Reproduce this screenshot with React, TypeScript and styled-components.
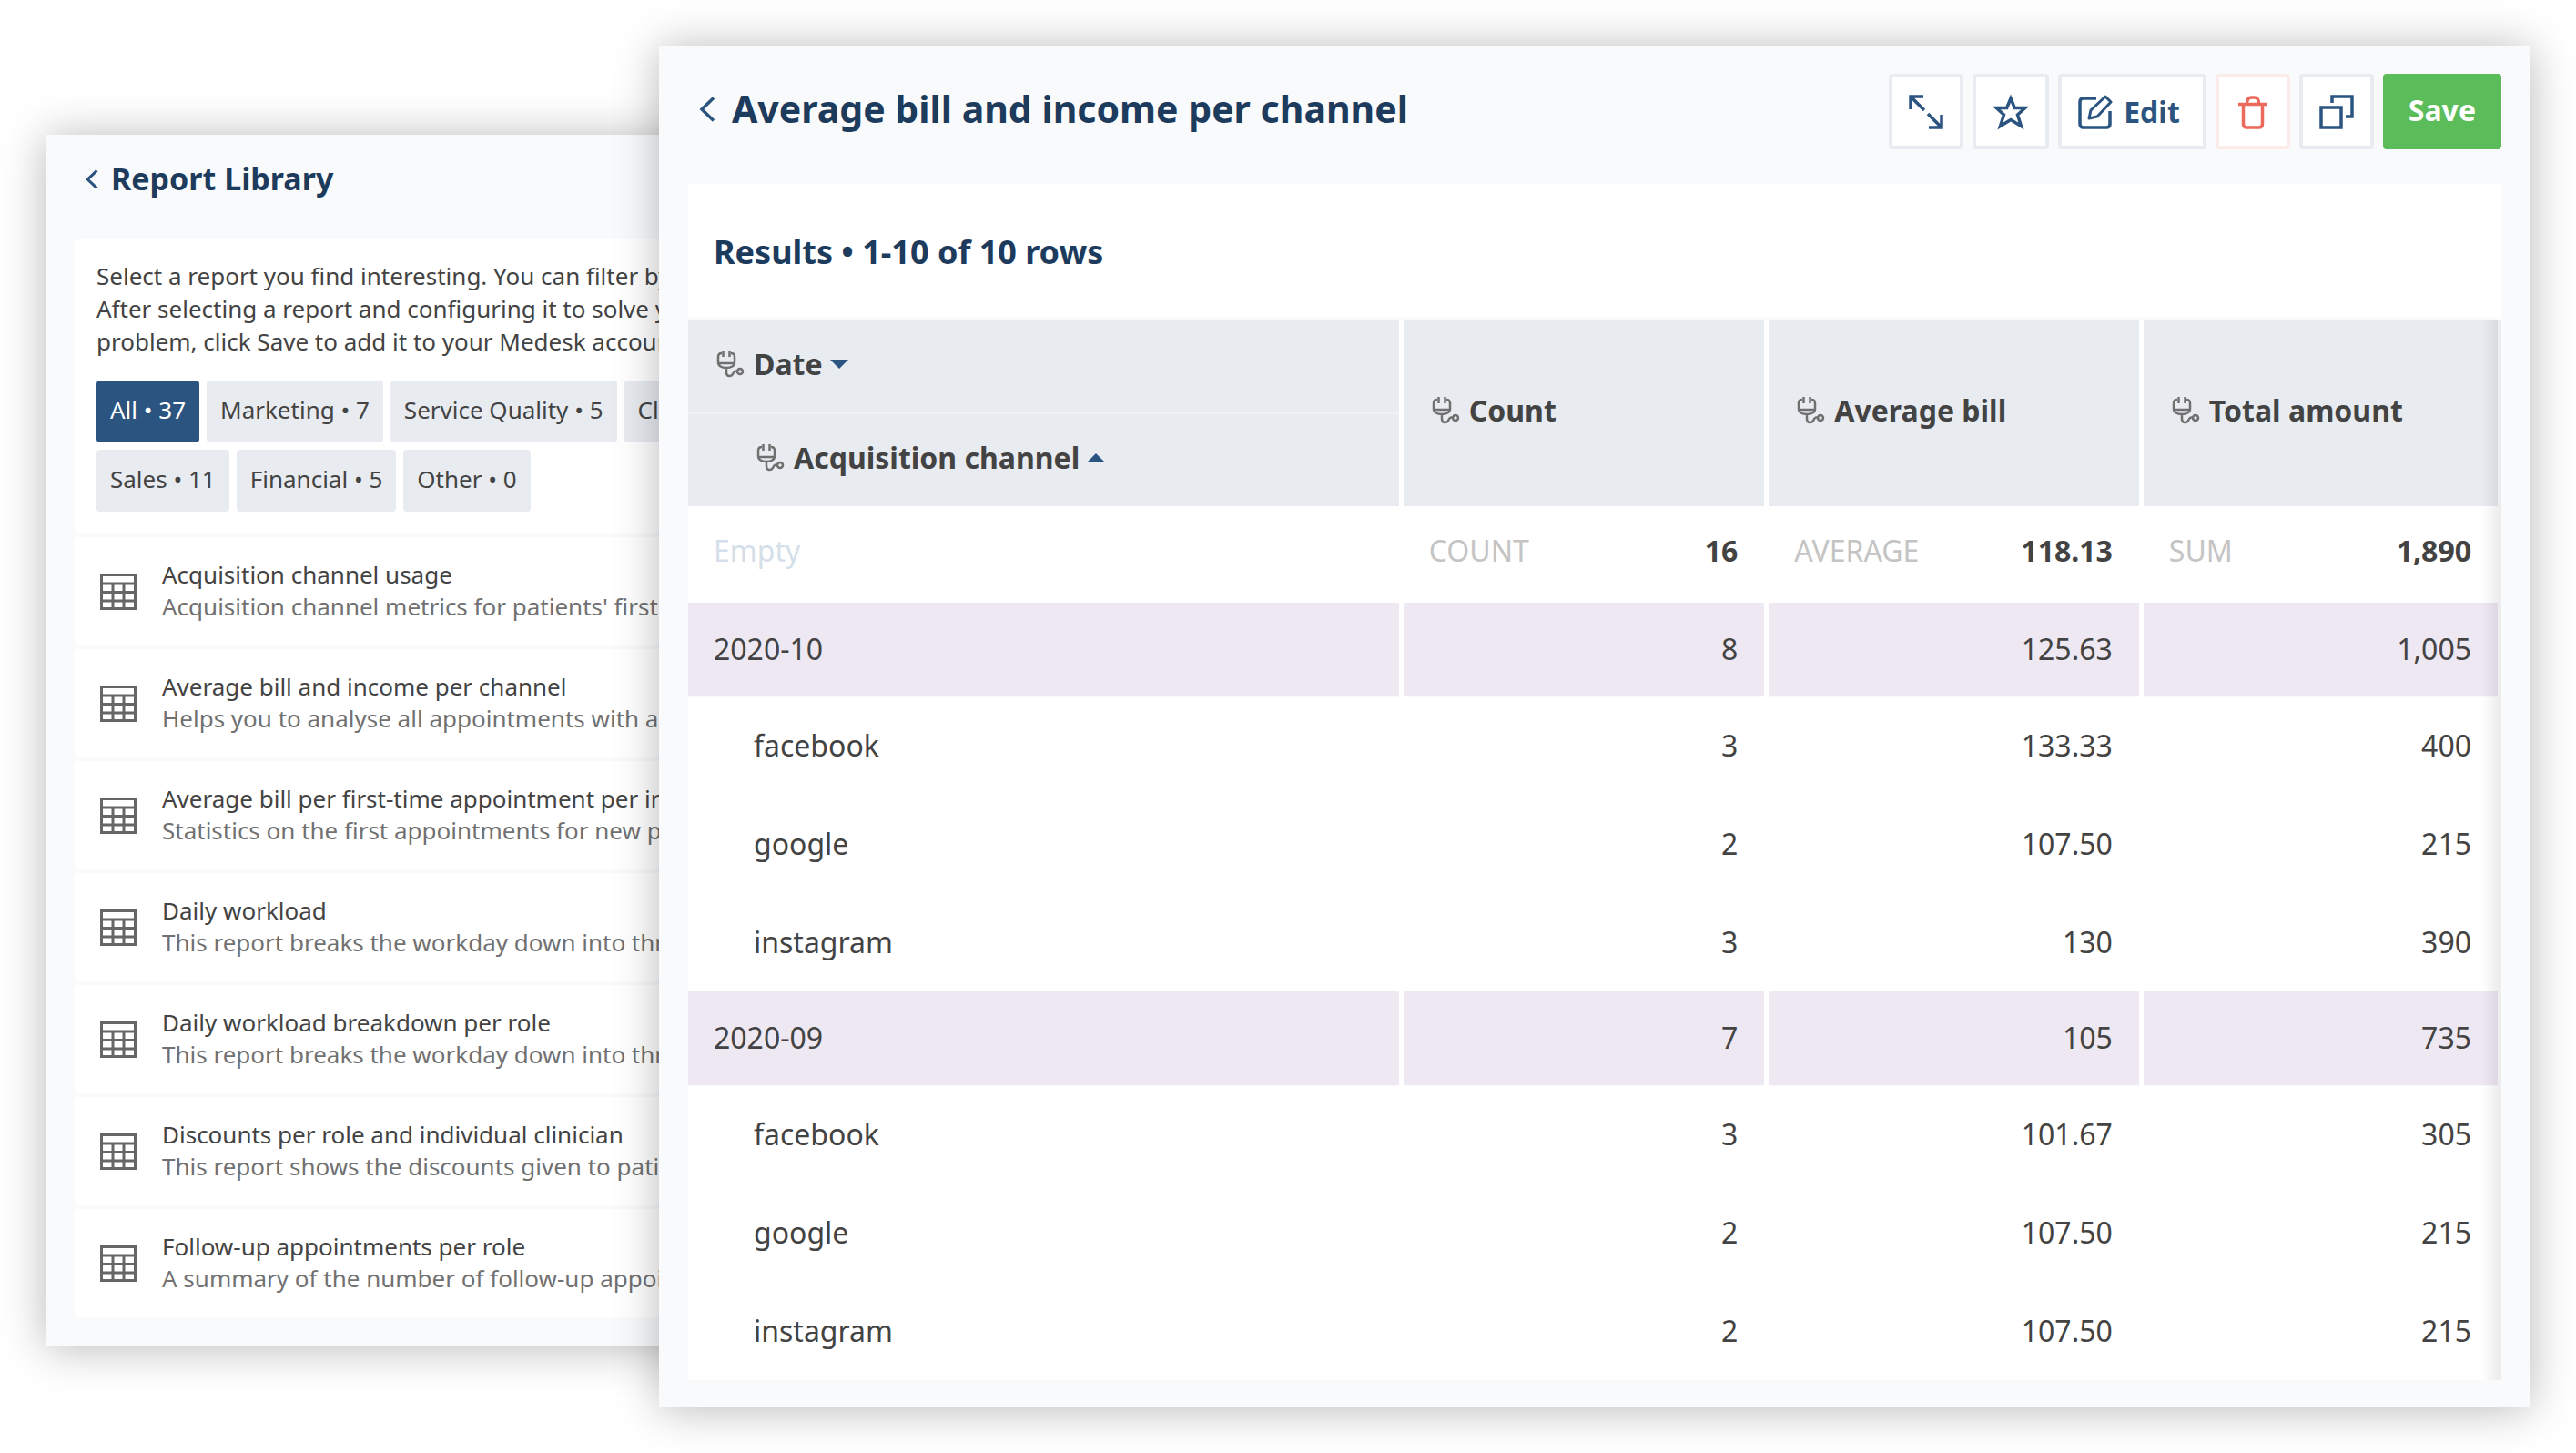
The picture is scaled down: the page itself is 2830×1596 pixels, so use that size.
import React from "react";
import styled, { createGlobalStyle } from "styled-components";

const font = '"Noto Sans", "Open Sans", sans-serif';
const navy = "#1d3b5c";
const blue = "#2b5480";
const ink = "#434343";

const GlobalStyle = createGlobalStyle`
  *, *::before, *::after { box-sizing: border-box; }
  body { margin: 0; background: #fff; font-family: ${font}; color: ${ink}; }
  button { font-family: inherit; cursor: pointer; }
  h1, h2, h3, p, ul { margin: 0; padding: 0; }
`;

const Stage = styled.main`
  position: relative;
  min-height: 100vh;
  overflow: hidden;
`;

const Panel = styled.section`
  position: absolute;
  background: #f9fafc;
  box-shadow: 0 2px 46px rgba(0, 0, 0, 0.28);
`;

const LibraryPanel = styled(Panel)`
  top: 148px;
  left: 50px;
  width: 32%;
  padding: 24px 32px 32px;
`;

const ReportPanel = styled(Panel)`
  top: 50px;
  left: 724px;
  right: 50px;
  padding: 31px 32px 30px;
`;

const TitleBar = styled.header<{ $height: number }>`
  display: flex;
  align-items: flex-start;
  justify-content: space-between;
  height: ${(p) => p.$height}px;
`;

const TitleGroup = styled.div<{ $height: number; $gap: number }>`
  display: flex;
  align-items: center;
  gap: ${(p) => p.$gap}px;
  height: ${(p) => p.$height}px;
  padding-left: 12px;
`;

const BackButton = styled.button`
  display: flex;
  padding: 2px 0 0;
  border: 0;
  background: none;
  color: ${blue};
`;

const Title = styled.h1<{ $size: number }>`
  color: ${navy};
  font-size: ${(p) => p.$size}px;
  line-height: 48px;
  font-weight: 700;
  white-space: nowrap;
`;

const Intro = styled.div`
  height: 322px;
  padding: 22px 24px;
  border-radius: 4px;
  background: #fff;
`;

const IntroText = styled.p`
  font-size: 26px;
  line-height: 36px;
  white-space: nowrap;
`;

const Filters = styled.div`
  display: flex;
  flex-wrap: wrap;
  gap: 8px;
  margin-top: 25px;
`;

const FilterButton = styled.button<{ $active?: boolean }>`
  height: 68px;
  padding: 0 15px 4px;
  border: 0;
  border-radius: 4px;
  background: ${(p) => (p.$active ? blue : "#e8ebf0")};
  color: ${(p) => (p.$active ? "#fff" : ink)};
  font-size: 26px;
  line-height: 36px;
`;

const ReportList = styled.ul`
  display: flex;
  flex-direction: column;
  gap: 4px;
  margin-top: 5px;
  list-style: none;
`;

const ReportItem = styled.li`
  display: flex;
  align-items: center;
  gap: 28px;
  height: 119px;
  padding: 0 28px;
  border-radius: 4px;
  background: #fff;
  white-space: nowrap;
  overflow: hidden;
`;

const ReportText = styled.div`
  padding-bottom: 2px;
`;

const ReportName = styled.h3`
  font-size: 26px;
  line-height: 35px;
  font-weight: 400;
`;

const ReportSummary = styled.p`
  color: #717171;
  font-size: 26px;
  line-height: 35px;
`;

const Toolbar = styled.div`
  display: flex;
  gap: 10px;
`;

const ToolButton = styled.button<{ $tone?: "danger" | "primary"; $labelled?: boolean }>`
  display: flex;
  align-items: center;
  justify-content: center;
  gap: 12px;
  min-width: 82px;
  height: 83px;
  padding: ${(p) => (p.$tone === "primary" ? "0 24px 3px" : p.$labelled ? "0 25px 0 18px" : "0 18px")};
  border: 4px solid
    ${(p) => (p.$tone === "danger" ? "#fbeceb" : p.$tone === "primary" ? "#5bbd5a" : "#e8ebf0")};
  border-radius: 4px;
  background: ${(p) => (p.$tone === "primary" ? "#5bbd5a" : "#fff")};
  color: ${(p) => (p.$tone === "danger" ? "#ec6a5c" : p.$tone === "primary" ? "#fff" : blue)};
  font-size: 32px;
  line-height: 40px;
  font-weight: 700;
`;

const Card = styled.div`
  position: relative;
  padding-right: 4px;
  background: #fff;
`;

const CardShade = styled.div`
  position: absolute;
  top: 150px;
  right: 0;
  bottom: 0;
  width: 22px;
  background: linear-gradient(to right, transparent, rgba(0, 0, 0, 0.07) 18px);
  pointer-events: none;
`;

const ResultsTitle = styled.h2`
  height: 150px;
  padding: 51px 28px 0;
  border-bottom: 4px solid #f9fafc;
  color: ${navy};
  font-size: 36px;
  line-height: 48px;
  font-weight: 700;
`;

const Table = styled.table`
  width: 100%;
  table-layout: fixed;
  border-collapse: collapse;
  font-size: 32px;
  line-height: 44px;
`;

const Col = styled.col<{ $share: number }>`
  width: ${(p) => p.$share}%;
`;

const HeadCell = styled.th<{ $indent?: boolean; $divided?: boolean }>`
  height: 102px;
  padding: 0 28px 6px ${(p) => (p.$indent ? 72 : 28)}px;
  border-left: 5px solid #fff;
  border-bottom: ${(p) => (p.$divided ? "2px solid #eef1f5" : "0")};
  background: #e8ebf0;
  text-align: left;
  font-weight: 700;
  &:first-child { border-left: 0; }
`;

const HeadLabel = styled.span`
  display: flex;
  align-items: center;
  gap: 8px;
  white-space: nowrap;
`;

const rowHeights = { total: 106, group: 103, leaf: 108 };

const BodyRow = styled.tr<{ $kind: keyof typeof rowHeights }>`
  height: ${(p) => rowHeights[p.$kind]}px;
  border-bottom: ${(p) => (p.$kind === "group" ? "1px solid #fafafc" : "0")};
  background: ${(p) => (p.$kind === "group" ? "#eee8f3" : "#fff")};
  & > th, & > td { padding-bottom: ${(p) => (p.$kind === "total" ? 9 : 0)}px; }
`;

const NameCell = styled.th<{ $indent?: boolean; $faded?: boolean }>`
  padding: 0 28px 0 ${(p) => (p.$indent ? 72 : 28)}px;
  color: ${(p) => (p.$faded ? "#d5dfe9" : ink)};
  text-align: left;
  font-weight: 400;
`;

const ValueCell = styled.td<{ $bold?: boolean }>`
  padding: 0 29px 0 28px;
  border-left: 5px solid #fff;
  text-align: right;
  font-weight: ${(p) => (p.$bold ? 700 : 400)};
`;

const Total = styled.div`
  display: flex;
  justify-content: space-between;
`;

const TotalKind = styled.span`
  color: #c4c4c4;
  font-weight: 400;
`;

const BackIcon = ({ small }: { small?: boolean }) => (
  <svg
    width={small ? 14 : 18}
    height={small ? 22 : 28}
    viewBox="0 0 18 28"
    fill="none"
    stroke="currentColor"
    strokeWidth={small ? 4 : 3.5}
  >
    <path d="M16 1.500 3 14l13 12.500" />
  </svg>
);

const GridIcon = () => (
  <svg width="40" height="40" viewBox="0 0 40 40" fill="none" stroke="#666" strokeWidth="3">
    <path d="M1.500 1.500h37v37h-37zM1.500 11h37M1.500 20.500h37M1.500 30h37M14 11v27M26 11v27" />
  </svg>
);

const PlugIcon = () => (
  <svg width="36" height="32" viewBox="0 0 36 32" fill="none" stroke="#707070" strokeWidth="2.500">
    <path d="M10.500 1v7M17.500 1v7M9 4C6 4 5 6 5 8v6c0 4 4 6 9 6s9-2 9-6V8c0-2-1-4-4-4M5 15h18M14 20v5c0 5 5 5 7 2 2-4 3-4 6-3" />
    <circle cx="29" cy="24" r="3" />
  </svg>
);

const SortIcon = ({ up }: { up?: boolean }) => (
  <svg width="20" height="10" viewBox="0 0 20 10" fill={blue}>
    <path d={up ? "M0 10 10 0l10 10z" : "M0 0h20L10 10z"} />
  </svg>
);

const ExpandIcon = () => (
  <svg width="38" height="38" viewBox="0 0 38 38" fill="none" stroke="currentColor" strokeWidth="3.500">
    <path d="M2 16V2h14M2 2l15 15M21 21l15 15M36 22v14H22" />
  </svg>
);

const StarIcon = () => (
  <svg width="40" height="40" viewBox="0 0 40 40" fill="none" stroke="currentColor" strokeWidth="3.500">
    <path
      strokeMiterlimit="8"
      d="M20 5l4.300 10.500h11.500L27.500 23l4 12.500L20 28.500l-11.500 7 4-12.500-8.300-7.500h11.500z"
    />
  </svg>
);

const EditIcon = () => (
  <svg width="38" height="38" viewBox="0 0 38 38" fill="none" stroke="currentColor" strokeWidth="3.500">
    <path d="M20 4H6Q2 4 2 8v24q0 4 4 4h25q4 0 4-4V18" />
    <path strokeWidth="3" strokeLinejoin="round" d="M12 26l2-9L30 2l6 6-15 16z" />
  </svg>
);

const TrashIcon = () => (
  <svg width="32" height="38" viewBox="0 0 32 38" fill="none" stroke="currentColor" strokeWidth="3.500">
    <path d="M0 10.500h32M5.500 11v21q0 4 4 4h13q4 0 4-4V11M9.500 10q0-7 5-7h3q5 0 5 7" />
  </svg>
);

const CopyIcon = () => (
  <svg width="38" height="38" viewBox="0 0 38 38" fill="none" stroke="currentColor" strokeWidth="3.500">
    <path d="M2 14h22v22H2zM14 9V2h22v22h-7" />
  </svg>
);

const filters = [
  "All • 37",
  "Marketing • 7",
  "Service Quality • 5",
  "Clinical • 9",
  "Sales • 11",
  "Financial • 5",
  "Other • 0",
];

const reports = [
  ["Acquisition channel usage", "Acquisition channel metrics for patients' first"],
  ["Average bill and income per channel", "Helps you to analyse all appointments with a"],
  ["Average bill per first-time appointment per in", "Statistics on the first appointments for new p"],
  ["Daily workload", "This report breaks the workday down into thr"],
  ["Daily workload breakdown per role", "This report breaks the workday down into thr"],
  ["Discounts per role and individual clinician", "This report shows the discounts given to patie"],
  ["Follow-up appointments per role", "A summary of the number of follow-up appoi"],
];

const totals = [
  ["COUNT", "16"],
  ["AVERAGE", "118.13"],
  ["SUM", "1,890"],
];

const rows = [
  { name: "2020-10", group: true, values: ["8", "125.63", "1,005"] },
  { name: "facebook", values: ["3", "133.33", "400"] },
  { name: "google", values: ["2", "107.50", "215"] },
  { name: "instagram", values: ["3", "130", "390"] },
  { name: "2020-09", group: true, values: ["7", "105", "735"] },
  { name: "facebook", values: ["3", "101.67", "305"] },
  { name: "google", values: ["2", "107.50", "215"] },
  { name: "instagram", values: ["2", "107.50", "215"] },
];

const Library = () => (
  <LibraryPanel>
    <TitleBar $height={91}>
      <TitleGroup $height={48} $gap={14}>
        <BackButton aria-label="Back"><BackIcon small /></BackButton>
        <Title as="h2" $size={34}>Report Library</Title>
      </TitleGroup>
    </TitleBar>
    <Intro>
      <IntroText>
        Select a report you find interesting. You can filter by
        <br />
        After selecting a report and configuring it to solve y
        <br />
        problem, click Save to add it to your Medesk accoun
      </IntroText>
      <Filters>
        {filters.map((label, i) => (
          <FilterButton key={label} $active={i === 0}>{label}</FilterButton>
        ))}
      </Filters>
    </Intro>
    <ReportList>
      {reports.map(([name, summary]) => (
        <ReportItem key={name}>
          <GridIcon />
          <ReportText>
            <ReportName>{name}</ReportName>
            <ReportSummary>{summary}</ReportSummary>
          </ReportText>
        </ReportItem>
      ))}
    </ReportList>
  </LibraryPanel>
);

const Report = () => (
  <ReportPanel>
    <TitleBar $height={121}>
      <TitleGroup $height={76} $gap={18}>
        <BackButton aria-label="Back"><BackIcon /></BackButton>
        <Title $size={41}>Average bill and income per channel</Title>
      </TitleGroup>
      <Toolbar>
        <ToolButton aria-label="Expand"><ExpandIcon /></ToolButton>
        <ToolButton aria-label="Add to favourites"><StarIcon /></ToolButton>
        <ToolButton $labelled><EditIcon />Edit</ToolButton>
        <ToolButton $tone="danger" aria-label="Delete"><TrashIcon /></ToolButton>
        <ToolButton aria-label="Duplicate"><CopyIcon /></ToolButton>
        <ToolButton $tone="primary">Save</ToolButton>
      </Toolbar>
    </TitleBar>
    <Card>
      <ResultsTitle>Results • 1-10 of 10 rows</ResultsTitle>
      <Table>
        <colgroup>
          <Col $share={39.4} />
          <Col $share={20.2} />
          <Col $share={20.7} />
          <Col $share={19.7} />
        </colgroup>
        <thead>
          <tr>
            <HeadCell $divided><HeadLabel><PlugIcon />Date<SortIcon /></HeadLabel></HeadCell>
            {["Count", "Average bill", "Total amount"].map((label) => (
              <HeadCell key={label} rowSpan={2}><HeadLabel><PlugIcon />{label}</HeadLabel></HeadCell>
            ))}
          </tr>
          <tr>
            <HeadCell $indent><HeadLabel><PlugIcon />Acquisition channel<SortIcon up /></HeadLabel></HeadCell>
          </tr>
        </thead>
        <tbody>
          <BodyRow $kind="total">
            <NameCell $faded>Empty</NameCell>
            {totals.map(([kind, value]) => (
              <ValueCell key={kind} $bold>
                <Total><TotalKind>{kind}</TotalKind>{value}</Total>
              </ValueCell>
            ))}
          </BodyRow>
          {rows.map((row, i) => (
            <BodyRow key={i} $kind={row.group ? "group" : "leaf"}>
              <NameCell $indent={!row.group}>{row.name}</NameCell>
              {row.values.map((value, j) => (
                <ValueCell key={j}>{value}</ValueCell>
              ))}
            </BodyRow>
          ))}
        </tbody>
      </Table>
      <CardShade />
    </Card>
  </ReportPanel>
);

const App = () => (
  <>
    <GlobalStyle />
    <Stage>
      <Library />
      <Report />
    </Stage>
  </>
);

export default App;
